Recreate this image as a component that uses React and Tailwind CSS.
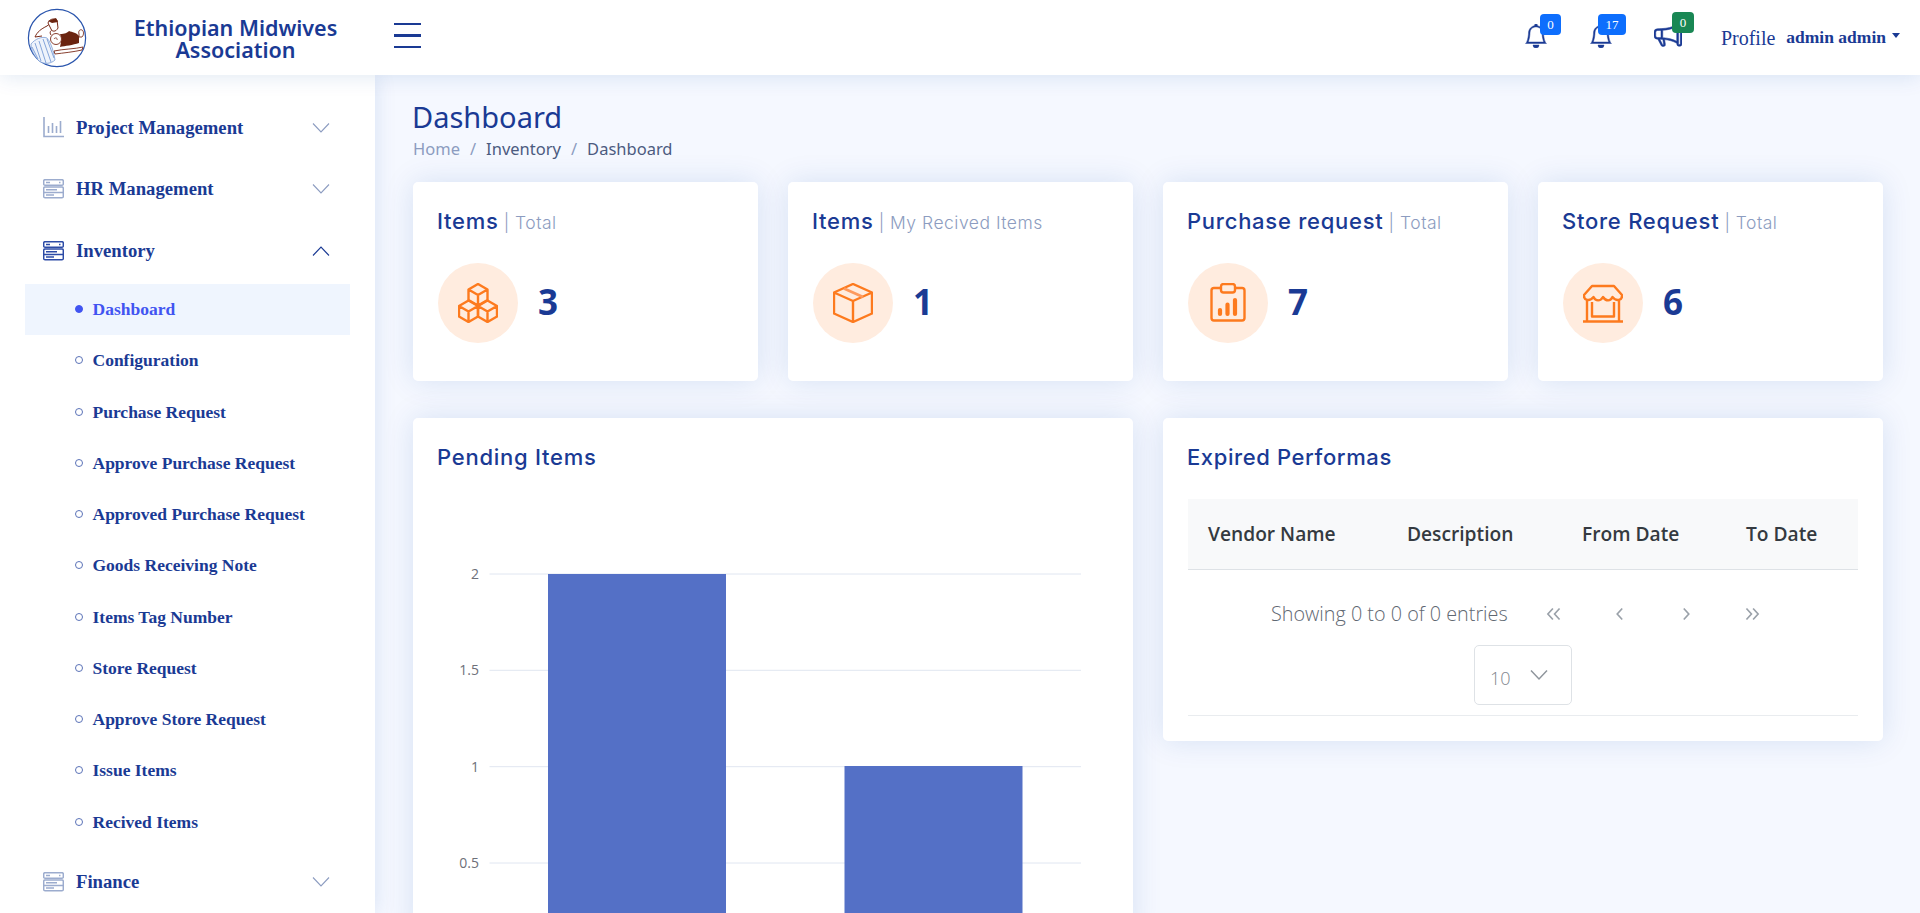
import React from "react";
import { BsBell, BsMegaphone } from "react-icons/bs";

const serif = "font-['Liberation_Serif',serif]";

function Chevron({ up, dark }) {
  return (
    <svg width="18" height="10" viewBox="0 0 18 10" fill="none" className={dark ? "text-[#1a3a94]" : "text-[#8c9cc0]"}>
      <path d={up ? "M1 9.5 L9 1 L17 9.5" : "M1 .5 L9 9 L17 .5"} stroke="currentColor" strokeWidth="1.100" />
    </svg>
  );
}

function ChartIcon() {
  return (
    <svg width="21" height="21" viewBox="0 0 21 21" fill="none" stroke="#9cacce">
      <path d="M1 0v19.500h20" strokeWidth="1.600" />
      <path d="M5.500 9v7M9.500 6v10M13.500 9v7M17.500 4v12" strokeWidth="1.600" />
    </svg>
  );
}

function StackIcon({ active }) {
  const c = active ? "#2c4ba6" : "#9cacce";
  return (
    <svg width="21" height="20" viewBox="0 0 21 20" fill="none" stroke={c} strokeWidth="1.500">
      <rect x=".7" y=".7" width="19.600" height="5.600" rx="1.300" />
      <rect x=".7" y="8" width="19.600" height="10.800" rx="1.300" />
      <path d="M.7 13.400h19.600M3 3.500h4M16 3.500h1.500M3 10.700h11M3 16h8" />
    </svg>
  );
}

function Logo() {
  return (
    <svg width="60" height="60" viewBox="0 0 60 60" fill="none" className="shrink-0">
      <circle cx="30" cy="30" r="28.600" stroke="#2a55ad" strokeWidth="1.200" fill="#fff" />
      <path d="M4 36 C8 31 15 28 20 30 C25 36 27 46 28 52 C24 56 16 57 11 52 C7 47 4 42 4 36Z" fill="#eef3fb" stroke="#6a90d0" strokeWidth=".7" />
      <path d="M8 35 L14 53 M12 33 L19 55 M16 31 L24 54 M20 31 L27 50 M5 39 L11 51" stroke="#6a90d0" strokeWidth=".8" />
      <path d="M8 29 C10 24 14 21 20 18 L25 14 M8 29 L15 28 M24 27 C22 24 24 22 26 22" stroke="#7a2a18" strokeWidth="1" />
      <path d="M21 15 C22 11 27 10 30 12 L31 20 C29 24 25 24 24 21Z" fill="#fff" stroke="#7a2a18" strokeWidth="1" />
      <path d="M21 13 L29 10 L31 14 L25 15Z" fill="#6b2410" />
      <path d="M33 26 C38 26 40 25 42 23 C45 24 50 25 52 28 L52 35 C46 37 38 38 33 39 C34 35 35 30 33 26Z" fill="#6b2410" />
      <circle cx="29" cy="31" r="5.500" fill="#fff" stroke="#7a2a18" strokeWidth=".9" />
      <path d="M27 31 C28 29 31 30 30 32" stroke="#7a2a18" strokeWidth=".8" />
      <path d="M52 26 C51 23 53 21 55 22 C57 23 57 27 55 29 L52 29Z" fill="#fff" stroke="#7a2a18" strokeWidth=".9" />
      <path d="M27 43 C36 41 48 41 56 39 L55 42 C46 44 36 45 28 46Z" fill="#fff" stroke="#7a2a18" strokeWidth=".9" />
    </svg>
  );
}

function BoxesIcon() {
  const cube = (x, y) => (
    <g transform={`translate(${x} ${y})`}>
      <path d="M9.500 0 L19 5.500 V16 L9.500 21.500 L0 16 V5.500Z M0 5.500 L9.500 11 L19 5.500 M9.500 11 V21.500" />
    </g>
  );
  return (
    <svg width="40" height="40" viewBox="0 0 40 40" fill="none" stroke="#fd7a1e" strokeWidth="2.400" strokeLinejoin="round">
      {cube(10.500, 1)}
      {cube(1, 17.500)}
      {cube(20, 17.500)}
    </svg>
  );
}

function BoxIcon() {
  return (
    <svg width="40" height="40" viewBox="0 0 40 40" fill="none" stroke="#fd7a1e" strokeWidth="2.400" strokeLinejoin="round">
      <path d="M20 1 L39 9.500 V30.500 L20 39 L1 30.500 V9.500Z M1 9.500 L20 18 L39 9.500 M20 18 V39" />
      <path d="M11 5.500 L30 14" strokeWidth="2.800" stroke="#fd9a5e" />
    </svg>
  );
}

function ClipIcon() {
  return (
    <svg width="40" height="40" viewBox="0 0 40 40" fill="none" stroke="#fd7a1e" strokeWidth="2.400">
      <path d="M12 5 H6 Q3.500 5 3.500 7.500 V35 Q3.500 37.500 6 37.500 H34 Q36.500 37.500 36.500 35 V7.500 Q36.500 5 34 5 H28" />
      <rect x="13" y="1" width="14" height="8.500" rx="2.500" />
      <path d="M12 27 V31 M19.500 21.500 V31 M27 17 V31" strokeWidth="4.200" strokeLinecap="round" />
    </svg>
  );
}

function ShopIcon() {
  return (
    <svg width="40" height="40" viewBox="0 0 40 40" fill="none" stroke="#fd7a1e" strokeWidth="2.400" strokeLinejoin="round">
      <path d="M9 3 H31 L39 12 C39.500 18 33 18.500 29.500 14 C27.500 18.500 23 18.500 20 14 C17.500 18.500 12.500 18.500 10.500 14 C7 18.500 .5 18 1 12Z" />
      <path d="M4 17 V38 M36 17 V38 M9 19 V33.500 H31 V19" />
      <path d="M0 38.500 H40" strokeWidth="2.600" />
    </svg>
  );
}

function StatCard({ title, sub, value, icon }) {
  return (
    <div className="h-[199px] bg-white rounded-[5px] shadow-[0_0_30px_rgba(1,70,160,0.13)] px-[25px] pt-[24px]">
      <div className="h-[30px] flex items-baseline text-[#1a3a94] font-['Inter',sans-serif] text-[22px] tracking-[0.75px] font-medium leading-[30px] whitespace-nowrap -ml-[1px]">
        {title}
        <span className="text-[#8c9cc0] text-[17.500px] tracking-[0.5px] font-light ml-[5px]">| {sub}</span>
      </div>
      <div className="flex items-center gap-5 mt-[27px]">
        <div className="w-20 h-20 rounded-full bg-[#ffecdf] flex items-center justify-center shrink-0">{icon}</div>
        <div className="text-[#1a3a94] font-['Noto_Sans',sans-serif] font-bold text-[35px] leading-none -mt-[4px]">{value}</div>
      </div>
    </div>
  );
}

function Badge({ color, w, children, className }) {
  return (
    <span className={`absolute ${w} h-[21px] rounded-[4px] ${color} text-white text-[13px] leading-[21px] text-center ${serif} ${className}`}>
      {children}
    </span>
  );
}

const subItems = [
  "Dashboard",
  "Configuration",
  "Purchase Request",
  "Approve Purchase Request",
  "Approved Purchase Request",
  "Goods Receiving Note",
  "Items Tag Number",
  "Store Request",
  "Approve Store Request",
  "Issue Items",
  "Recived Items",
];

function MainRow({ icon, label, up }) {
  return (
    <div className="h-[61.500px] flex items-center pl-[43px] pr-[45px]">
      <span className="w-[33px] shrink-0 flex">{icon}</span>
      <span className="flex-1 text-[#1a3a94] font-bold text-[18.700px]">{label}</span>
      <Chevron up={up} dark={up} />
    </div>
  );
}

function Arrow({ d }) {
  return (
    <svg width="20" height="20" viewBox="0 0 18 18" fill="none" stroke="#9aa1a9" strokeWidth="1.500">
      <path d={d} />
    </svg>
  );
}

export default function App() {
  return (
    <div className={`h-[913px] overflow-hidden bg-[#f5f8ff] flex flex-col ${serif}`}>
      <header className="relative z-20 h-[75px] shrink-0 bg-white shadow-[0_2px_20px_rgba(1,70,160,0.12)] flex items-center">
        <div className="w-[375px] shrink-0 flex items-center pl-[27px]">
          <Logo />
          <div className="w-[280px] pl-[17px] text-center text-[#1a3a94] font-['Noto_Sans',sans-serif] font-semibold text-[21.500px] leading-[22px] mt-[2px]">
            Ethiopian Midwives
            <br />
            Association
          </div>
        </div>
        <div className="ml-[19px] -mt-[4px] flex flex-col gap-[9px]">
          <span className="block w-[27px] h-[2.500px] bg-[#1a3a94]" />
          <span className="block w-[27px] h-[2.500px] bg-[#1a3a94]" />
          <span className="block w-[27px] h-[2.500px] bg-[#1a3a94]" />
        </div>
        <div className="ml-auto flex items-center pr-[20px] text-[#1a3a94]">
          <div className="relative w-[24px] h-[24px] -mt-[3px]">
            <BsBell size={24} stroke="currentColor" strokeWidth="0.300" />
            <Badge color="bg-[#0d6efd]" w="w-[21px]" className="-top-[10px] left-[16px]">0</Badge>
          </div>
          <div className="relative w-[24px] h-[24px] -mt-[3px] ml-[41px]">
            <BsBell size={24} stroke="currentColor" strokeWidth="0.300" />
            <Badge color="bg-[#0d6efd]" w="w-[28px]" className="-top-[10px] left-[9px]">17</Badge>
          </div>
          <div className="relative w-[28px] h-[28px] -mt-[7px] ml-[41px]">
            <BsMegaphone size={28} stroke="currentColor" strokeWidth="0.300" />
            <Badge color="bg-[#198754]" w="w-[22px]" className="-top-[8px] left-[18px]">0</Badge>
          </div>
          <span className="text-[20px] ml-[39px]">Profile</span>
          <span className="font-bold text-[17.500px] ml-[11px]">admin admin</span>
          <span className="ml-[6px] -mt-[5px] w-0 h-0 border-x-[4.500px] border-x-transparent border-t-[5px] border-t-[#1a3a94]" />
        </div>
      </header>

      <div className="flex-1 flex min-h-0">
        <aside className="relative z-10 w-[375px] shrink-0 bg-white shadow-[0_0_20px_rgba(1,70,160,0.13)] pt-[22px]">
          <MainRow icon={<ChartIcon />} label="Project Management" />
          <MainRow icon={<StackIcon />} label="HR Management" />
          <MainRow icon={<StackIcon active />} label="Inventory" up />
          <div className="mt-[2px] mb-[4px] mx-[25px]">
            {subItems.map((s, i) => (
              <div key={s} className={`h-[51.250px] flex items-center pl-[50px] font-bold text-[17.500px] ${i === 0 ? "bg-[#eff5fe] text-[#4154f1]" : "text-[#1a3a94]"}`}>
                <span className={`w-2 h-2 rounded-full mr-[9.500px] shrink-0 border ${i === 0 ? "bg-[#4154f1] border-[#4154f1]" : "border-[#5b73b8] bg-white"}`} />
                {s}
              </div>
            ))}
          </div>
          <MainRow icon={<StackIcon />} label="Finance" />
        </aside>

        <main className="flex-1 min-w-0 pl-[38px] pr-[37px] pt-[21px]">
          <h1 className="text-[#1a3a94] font-['Noto_Sans',sans-serif] text-[29px] leading-[42px] font-normal -ml-[1px]">Dashboard</h1>
          <div className="flex gap-[10px] text-[16.500px] leading-[22px] font-['Noto_Sans',sans-serif]">
            <span className="text-[#8c9cc0]">Home</span>
            <span className="text-[#8c9cc0]">/</span>
            <span className="text-[#4c5b7f]">Inventory</span>
            <span className="text-[#8c9cc0]">/</span>
            <span className="text-[#4c5b7f]">Dashboard</span>
          </div>

          <div className="grid grid-cols-4 gap-[30px] mt-[22px]">
            <StatCard title="Items" sub="Total" value="3" icon={<BoxesIcon />} />
            <StatCard title="Items" sub="My Recived Items" value="1" icon={<BoxIcon />} />
            <StatCard title="Purchase request" sub="Total" value="7" icon={<ClipIcon />} />
            <StatCard title="Store Request" sub="Total" value="6" icon={<ShopIcon />} />
          </div>

          <div className="grid grid-cols-2 gap-[30px] mt-[37px] items-start">
            <section className="h-[520px] bg-white rounded-[5px] shadow-[0_0_30px_rgba(1,70,160,0.13)] pl-[25px] pt-[24px]">
              <h2 className="text-[#1a3a94] font-['Inter',sans-serif] text-[22px] tracking-[0.75px] font-medium leading-[30px] -ml-[1px]">Pending Items</h2>
              <svg width="670" height="440" viewBox="0 0 670 440" className="block mt-[8px]">
                {[
                  [94, "2"],
                  [190.300, "1.5"],
                  [286.700, "1"],
                  [383, "0.5"],
                ].map(([y, t]) => (
                  <g key={t}>
                    <line x1="51.500" x2="643" y1={y} y2={y} stroke="#e0e6f1" />
                    <text x="41" y={y + 5} textAnchor="end" fontSize="14" fill="#6e7079" fontFamily="'Open Sans',sans-serif">{t}</text>
                  </g>
                ))}
                <rect x="110" y="94" width="178" height="346" fill="#5470c6" />
                <rect x="406.500" y="286" width="178" height="154" fill="#5470c6" />
              </svg>
            </section>

            <section className="bg-white rounded-[5px] shadow-[0_0_30px_rgba(1,70,160,0.13)] px-[25px] pt-[24px] pb-[26px] h-[323px]">
              <h2 className="text-[#1a3a94] font-['Inter',sans-serif] text-[22px] tracking-[0.6px] font-medium leading-[30px] -ml-[1px]">Expired Performas</h2>
              <div className="mt-[27px] h-[71px] pt-[1px] bg-[#f8f9fa] border-b border-[#dee2e6] flex items-center font-['Open_Sans',sans-serif] font-semibold text-[19.200px] text-[#343a40] whitespace-nowrap">
                <span className="w-[219px] pl-[20px]">Vendor Name</span>
                <span className="w-[175px]">Description</span>
                <span className="w-[164px]">From Date</span>
                <span>To Date</span>
              </div>
              <div className="h-[145.500px] border-b border-[#e9ecef] flex flex-col items-center pt-[29px]">
                <div className="flex items-center h-[30px] pr-[13px] font-['Open_Sans',sans-serif] text-[19.800px] text-[#5f6872] whitespace-nowrap">
                  <span className="w-[237px] font-light">Showing 0 to 0 of 0 entries</span>
                  <span className="flex gap-[46px] ml-[36px]">
                    <Arrow d="M8 4 L3.500 9 L8 14 M14 4 L9.500 9 L14 14" />
                    <Arrow d="M11 4 L6.500 9 L11 14" />
                    <Arrow d="M7 4 L11.500 9 L7 14" />
                    <Arrow d="M4 4 L8.500 9 L4 14 M10 4 L14.500 9 L10 14" />
                  </span>
                </div>
                <div className="mt-[16px] w-[98px] h-[60px] rounded-[5px] border border-[#dee2e6] flex items-center pl-[15px] text-[#7f868e] font-['Open_Sans',sans-serif] font-light text-[18px]">
                  <span className="mt-[6px]">10</span>
                  <svg width="20" height="12" viewBox="0 0 20 12" fill="none" stroke="#8f959c" strokeWidth="1.500" className="ml-[18px]">
                    <path d="M2 1.500 L10 10 L18 1.500" />
                  </svg>
                </div>
              </div>
            </section>
          </div>
        </main>
      </div>
    </div>
  );
}
